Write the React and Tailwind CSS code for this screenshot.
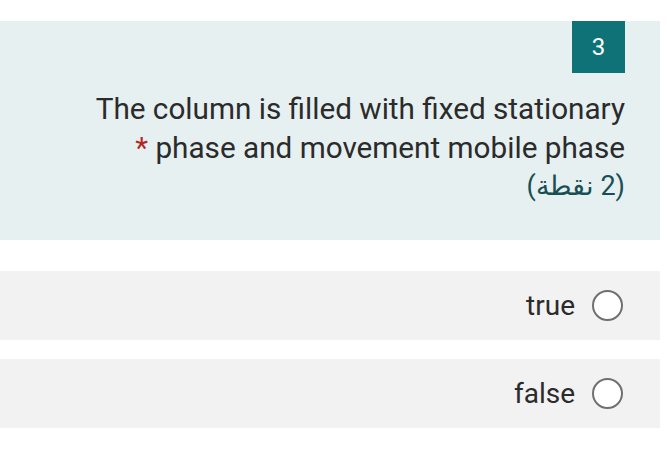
import React from "react";

const font = { fontFamily: "Roboto, 'Noto Sans', sans-serif" };

function Option({ label }) {
  return (
    <div className="h-[69px] bg-[#f2f2f2] flex items-center justify-end pr-[37px] gap-[17px]">
      <span className="text-[28px] text-[#2b2b2b]">{label}</span>
      <span className="w-[31px] h-[31px] rounded-full border-2 border-[#6f6f6f] bg-white" />
    </div>
  );
}

export default function App() {
  return (
    <div className="w-[667px] h-[465px] bg-white pt-[21px] pr-[7px]" style={font}>
      <div className="h-[219px] bg-[#e6f0f1] flex flex-col items-end pr-[35px]">
        <div className="w-[53px] h-[52px] bg-[#0e7277] text-white text-[24px] flex items-center justify-center">
          3
        </div>
        <div dir="ltr" className="mt-[16px] text-right text-[29.7px] leading-[39px] text-[#2b2b2b]">
          <div>The column is filled with fixed stationary</div>
          <div>
            <span className="text-[#b3261e]">*</span> phase and movement mobile phase
          </div>
          <div dir="rtl" className="text-[27px] text-[#174f52]">(2 نقطة)</div>
        </div>
      </div>
      <div className="mt-[31px]">
        <Option label="true" />
      </div>
      <div className="mt-[19px]">
        <Option label="false" />
      </div>
    </div>
  );
}
